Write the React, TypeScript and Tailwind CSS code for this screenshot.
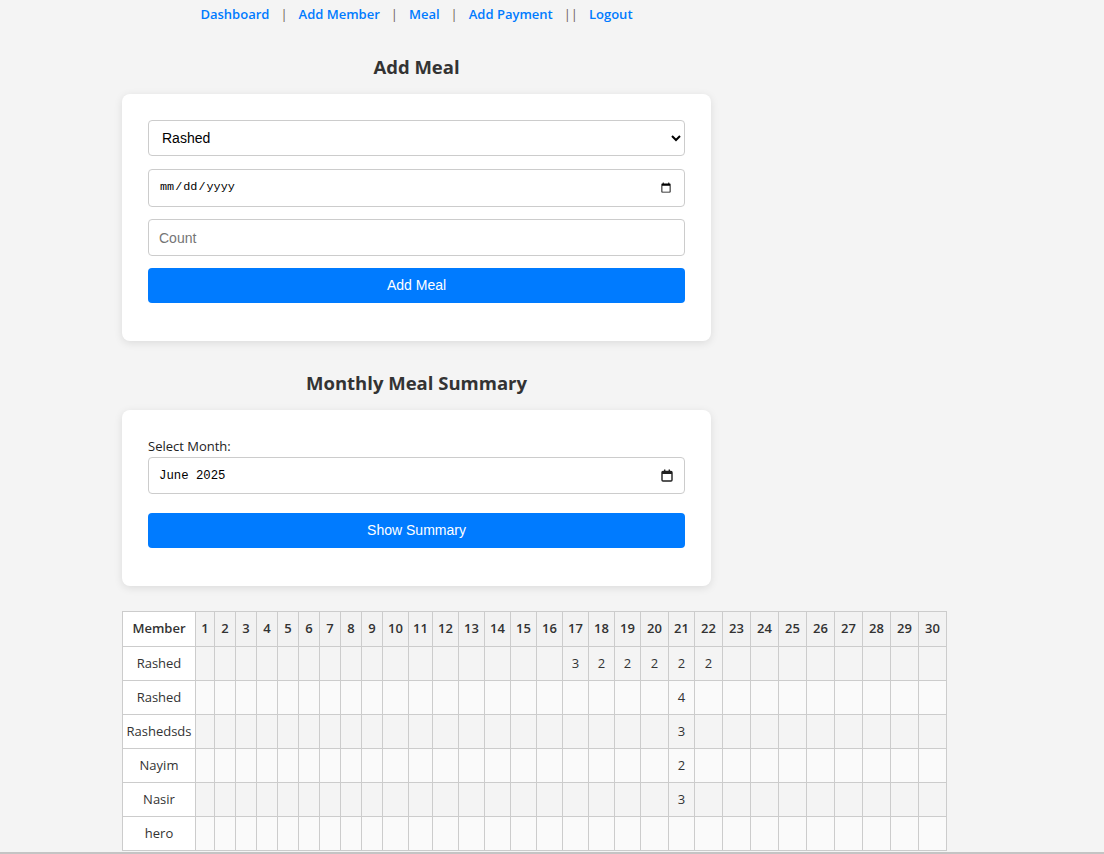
export default function App() {
    const days = Array.from({ length: 30 }, (_, i) => i + 1);

    // column widths read off the reference (member column first)
    const colWidths = [
        73, 19, 21, 21, 21, 21, 21, 21, 21, 21, 26, 24, 26, 26, 26, 26, 26, 26, 26, 26, 28, 26, 28, 28, 28, 28, 28, 28,
        28, 28, 28,
    ];

    const rows: { name: string; meals: Record<number, number> }[] = [
        { name: "Rashed", meals: { 17: 3, 18: 2, 19: 2, 20: 2, 21: 2, 22: 2 } },
        { name: "Rashed", meals: { 21: 4 } },
        { name: "Rashedsds", meals: { 21: 3 } },
        { name: "Nayim", meals: { 21: 2 } },
        { name: "Nasir", meals: { 21: 3 } },
        { name: "hero", meals: {} },
    ];

    return (
        <div className="min-h-screen bg-[#f4f4f4] font-['Open_Sans',sans-serif] text-[#333]">
            <div className="ml-[122px] w-[589px]">
                {/* Nav */}
                <nav className="flex justify-center items-center gap-[11px] pt-[4px] text-[13px] font-semibold leading-[20px]">
                    <a className="text-[#007bff]">Dashboard</a>
                    <span className="text-[#6f6258] font-normal">|</span>
                    <a className="text-[#007bff]">Add Member</a>
                    <span className="text-[#6f6258] font-normal">|</span>
                    <a className="text-[#007bff]">Meal</a>
                    <span className="text-[#6f6258] font-normal">|</span>
                    <a className="text-[#007bff]">Add Payment</a>
                    <span className="text-[#6f6258] font-normal">||</span>
                    <a className="text-[#007bff]">Logout</a>
                </nav>

                {/* Add Meal */}
                <h2 className="mt-[30px] text-center text-[18.5px] font-bold leading-[26px] text-[#333]">Add Meal</h2>
                <div className="mt-[14px] rounded-lg bg-white px-[26px] pt-[26px] pb-[26px] shadow-[0_2px_8px_rgba(0,0,0,0.1)]">
                    <select className="mb-[13px] block h-[36px] w-full rounded-[4px] border border-[#ccc] bg-white pl-[9px] pr-[6px] font-['Liberation_Sans',Arial,sans-serif] text-[14px] text-black">
                        <option>Rashed</option>
                    </select>
                    <input
                        type="date"
                        className="mb-[12px] block h-[38px] w-full rounded-[4px] border border-[#ccc] bg-white px-[10px] font-['Liberation_Mono',monospace] text-[11.8px] text-black"
                    />
                    <input
                        type="number"
                        placeholder="Count"
                        className="mb-[12px] block h-[37px] w-full rounded-[4px] border border-[#ccc] bg-white px-[10px] font-['Liberation_Sans',Arial,sans-serif] text-[14px] text-black placeholder:text-[#757575]"
                    />
                    <button className="mb-[12px] block h-[35px] w-full rounded-[4px] bg-[#007bff] font-['Liberation_Sans',Arial,sans-serif] text-[14px] text-white">
                        Add Meal
                    </button>
                </div>

                {/* Monthly Meal Summary */}
                <h2 className="mt-[29px] text-center text-[18.5px] font-bold leading-[26px] text-[#333]">
                    Monthly Meal Summary
                </h2>
                <div className="mt-[14px] rounded-lg bg-white px-[26px] pt-[26px] pb-[26px] shadow-[0_2px_8px_rgba(0,0,0,0.1)]">
                    <label className="block text-[13px] leading-[21px] text-[#222]">Select Month:</label>
                    <div className="relative mb-[19px]">
                        <input
                            type="text"
                            readOnly
                            value="June 2025"
                            className="block h-[37px] w-full rounded-[4px] border border-[#ccc] bg-white px-[10px] font-['Liberation_Mono',monospace] text-[12.3px] text-black"
                        />
                        <svg
                            className="pointer-events-none absolute right-[12px] top-[12px]"
                            width="12"
                            height="13"
                            viewBox="0 0 12 13"
                        >
                            <rect x="1" y="2.5" width="10" height="9.5" rx="1" fill="none" stroke="#202020" strokeWidth="1.4" />
                            <rect x="1" y="2.5" width="10" height="2.5" fill="#202020" />
                            <rect x="3" y="0.5" width="1.4" height="2.5" fill="#202020" />
                            <rect x="7.6" y="0.5" width="1.4" height="2.5" fill="#202020" />
                        </svg>
                    </div>
                    <button className="mb-[12px] block h-[35px] w-full rounded-[4px] bg-[#007bff] font-['Liberation_Sans',Arial,sans-serif] text-[14px] text-white">
                        Show Summary
                    </button>
                </div>
            </div>

            {/* Summary table */}
            <div className="ml-[122px] mt-[25px] w-max">
                <table className="table-fixed border-collapse text-[13px] text-[#333]" style={{ width: 825 }}>
                    <colgroup>
                        {colWidths.map((w, i) => (
                            <col key={i} style={{ width: w }} />
                        ))}
                    </colgroup>
                    <thead>
                        <tr className="h-[35px]">
                            <th className="border border-[#ccc] bg-white px-[4px] font-semibold">Member</th>
                            {days.map((d) => (
                                <th key={d} className="border border-[#ccc] bg-[#f2f2f2] px-0 font-semibold">
                                    {d}
                                </th>
                            ))}
                        </tr>
                    </thead>
                    <tbody>
                        {rows.map((r, i) => (
                            <tr key={i} className="h-[34px]">
                                <td className="border border-[#ccc] bg-white px-0 text-center">{r.name}</td>
                                {days.map((d) => (
                                    <td
                                        key={d}
                                        className={
                                            i % 2 === 0
                                                ? "border border-[#ccc] bg-[#f4f4f4] px-0 text-center"
                                                : "border border-[#ccc] bg-[#fafafa] px-0 text-center"
                                        }
                                    >
                                        {r.meals[d] ?? ""}
                                    </td>
                                ))}
                            </tr>
                        ))}
                    </tbody>
                </table>
            </div>

            <div className="fixed bottom-0 left-0 h-[2px] w-full bg-[#c4c4c4]" />
        </div>
    );
}
